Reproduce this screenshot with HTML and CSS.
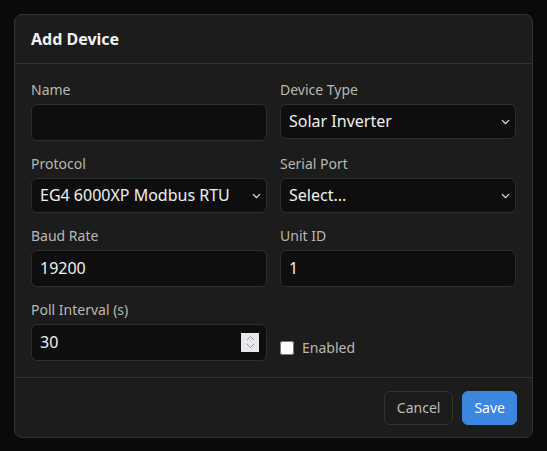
FILE: index.html
```html
<!DOCTYPE html>
<html>
<head>
<meta charset="utf-8">
<link rel="stylesheet" href="styles.css">
</head>
<body>
<div class="overlay">
  <div class="modal">
    <div class="modal-header">Add Device</div>
    <div class="modal-body">
      <div class="field">
        <label class="label">Name</label>
        <input class="input" type="text" value="">
      </div>
      <div class="field">
        <label class="label">Device Type</label>
        <div class="select-wrap">
          <select class="input select"><option>Solar Inverter</option></select>
          <svg class="chev" width="9" height="6" viewBox="0 0 9 6"><path d="M1 1.2l3.5 3.5 3.5-3.5" fill="none" stroke="#e8e8e8" stroke-width="1.2"/></svg>
        </div>
      </div>
      <div class="field">
        <label class="label">Protocol</label>
        <div class="select-wrap">
          <select class="input select"><option>EG4 6000XP Modbus RTU</option></select>
          <svg class="chev" width="9" height="6" viewBox="0 0 9 6"><path d="M1 1.2l3.5 3.5 3.5-3.5" fill="none" stroke="#e8e8e8" stroke-width="1.2"/></svg>
        </div>
      </div>
      <div class="field">
        <label class="label">Serial Port</label>
        <div class="select-wrap">
          <select class="input select"><option>Select...</option></select>
          <svg class="chev" width="9" height="6" viewBox="0 0 9 6"><path d="M1 1.2l3.5 3.5 3.5-3.5" fill="none" stroke="#e8e8e8" stroke-width="1.2"/></svg>
        </div>
      </div>
      <div class="field">
        <label class="label">Baud Rate</label>
        <input class="input" type="text" value="19200">
      </div>
      <div class="field">
        <label class="label">Unit ID</label>
        <input class="input" type="text" value="1">
      </div>
      <div class="field">
        <label class="label">Poll Interval (s)</label>
        <div class="select-wrap">
          <input class="input" type="text" value="30">
          <span class="spin">
            <svg width="9" height="14" viewBox="0 0 9 14"><path d="M1 5l3.5-3.5L8 5M1 9l3.5 3.5L8 9" fill="none" stroke="#9a9aa0" stroke-width="1"/></svg>
          </span>
        </div>
      </div>
      <div class="field field-check">
        <label class="check"><input type="checkbox"> <span>Enabled</span></label>
      </div>
    </div>
    <div class="modal-footer">
      <button class="btn btn-cancel">Cancel</button>
      <button class="btn btn-save">Save</button>
    </div>
  </div>
</div>
</body>
</html>
```
FILE: styles.css
```css
html, body {
  margin: 0;
  padding: 0;
  height: 100%;
  background: #0a0a0a;
  font-family: "Noto Sans", "Open Sans", sans-serif;
}
.overlay {
  height: 100%;
  display: flex;
  align-items: center;
  justify-content: center;
}
.modal {
  width: 519px;
  box-sizing: border-box;
  background: #1c1c1c;
  border: 1px solid #333;
  border-radius: 8px;
}
.modal-header {
  padding: 14px 16px 14px;
  font-size: 16px;
  line-height: 20px;
  font-weight: 700;
  color: #f2f2f2;
  border-bottom: 1px solid #333;
}
.modal-body {
  padding: 16px 16px 16px;
  display: grid;
  grid-template-columns: 1fr 1fr;
  column-gap: 13px;
  row-gap: 13px;
  align-items: start;
}
.field {
  display: flex;
  flex-direction: column;
}
.label {
  font-size: 14px;
  line-height: 20px;
  color: #b8b8b2;
  margin-bottom: 4px;
}
.input {
  box-sizing: border-box;
  height: 37px;
  width: 100%;
  margin: 0;
  padding: 0 8px;
  background: #0e0e0e;
  border: 1px solid #2e2e2e;
  border-radius: 6px;
  color: #f0f0f0;
  font-family: inherit;
  font-size: 16px;
  outline: none;
}
.select-wrap {
  position: relative;
}
.select {
  height: 35px;
  padding: 0 28px 0 8px;
  appearance: none;
  -webkit-appearance: none;
  display: block;
}
.chev {
  position: absolute;
  right: 6px;
  top: 15px;
  pointer-events: none;
}
.spin {
  position: absolute;
  right: 8px;
  top: 9px;
  width: 18px;
  height: 19px;
  background: #e9e9ed;
  display: flex;
  align-items: center;
  justify-content: center;
}
.field-check {
  align-self: end;
  padding-bottom: 3px;
}
.check {
  display: flex;
  align-items: center;
  gap: 8px;
  font-size: 14px;
  line-height: 20px;
  color: #b8b8b2;
}
.check input {
  margin: 0;
  width: 14px;
  height: 14px;
}
.modal-footer {
  border-top: 1px solid #333;
  padding: 13px 15px 12px;
  display: flex;
  justify-content: flex-end;
  gap: 9px;
}
.btn {
  height: 34px;
  box-sizing: border-box;
  border-radius: 6px;
  font-family: inherit;
  font-size: 14px;
  padding: 0 12px;
  cursor: pointer;
}
.btn-cancel {
  background: transparent;
  border: 1px solid #333;
  color: #bdbdb8;
}
.btn-save {
  background: #3b87e0;
  border: 1px solid #3b87e0;
  color: #fff;
  padding: 0 11px;
}
```
